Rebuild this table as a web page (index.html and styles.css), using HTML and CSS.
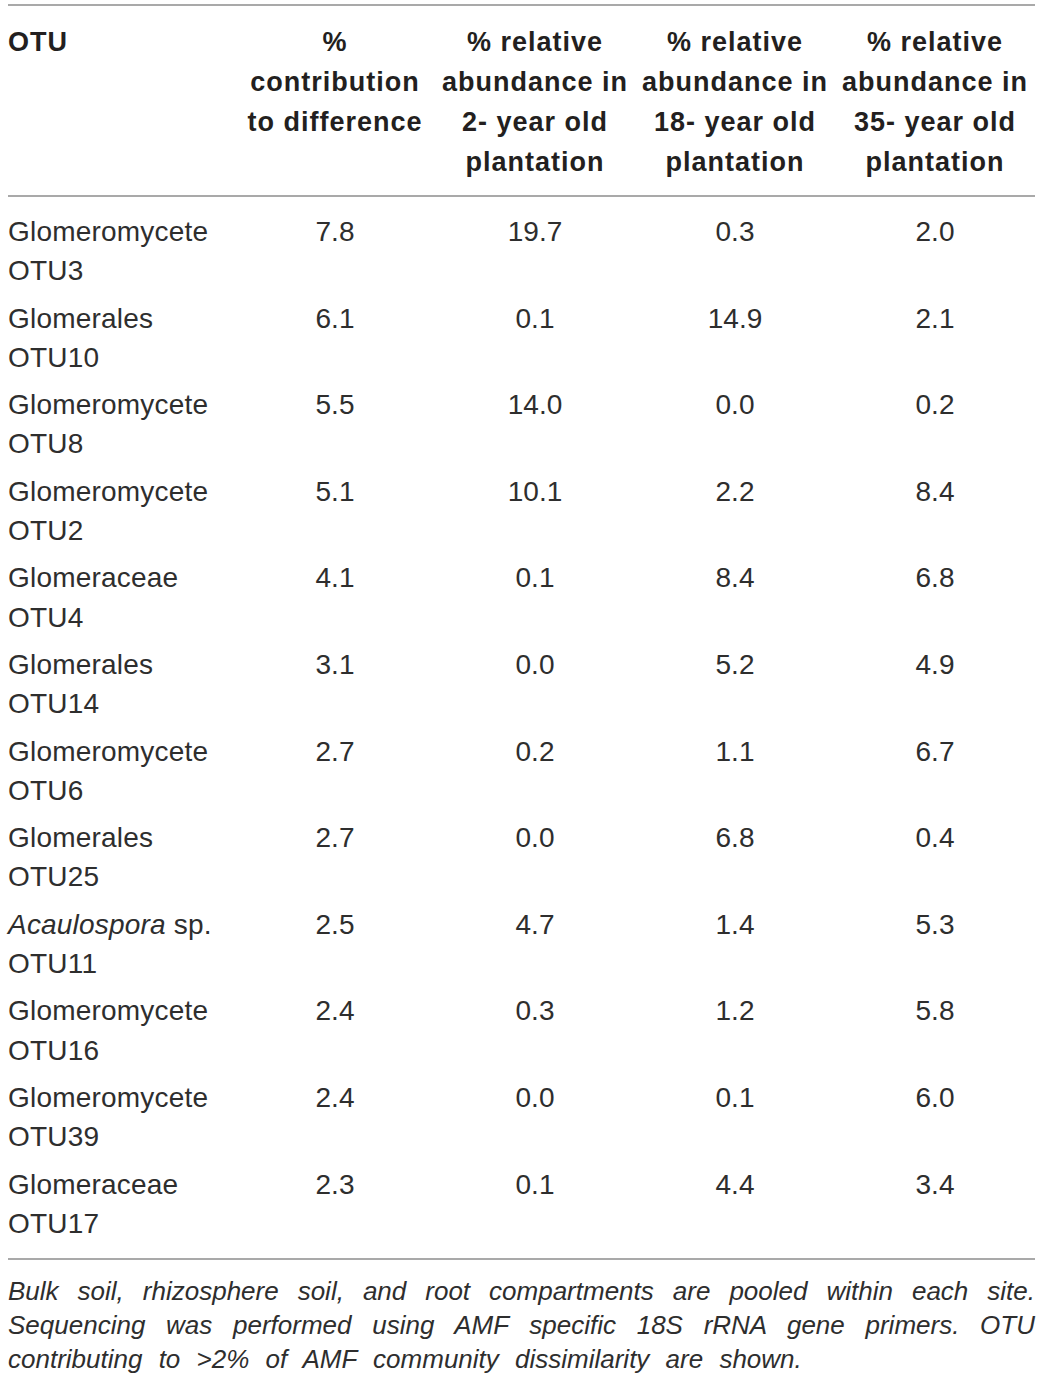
FILE: index.html
```html
<!DOCTYPE html>
<html lang="en">
<head>
    <meta charset="UTF-8">
    <title>AMF OTU contribution table</title>
    <link rel="stylesheet" href="styles.css">
</head>
<body>
    <div class="table-wrap">
        <table class="otu-table">
            <thead>
                <tr>
                    <th class="col-name">OTU</th>
                    <th>%<br>contribution<br>to difference</th>
                    <th>% relative<br>abundance in<br>2- year old<br>plantation</th>
                    <th>% relative<br>abundance in<br>18- year old<br>plantation</th>
                    <th>% relative<br>abundance in<br>35- year old<br>plantation</th>
                </tr>
            </thead>
            <tbody>
                <tr><td class="col-name">Glomeromycete<br>OTU3</td><td>7.8</td><td>19.7</td><td>0.3</td><td>2.0</td></tr>
                <tr><td class="col-name">Glomerales<br>OTU10</td><td>6.1</td><td>0.1</td><td>14.9</td><td>2.1</td></tr>
                <tr><td class="col-name">Glomeromycete<br>OTU8</td><td>5.5</td><td>14.0</td><td>0.0</td><td>0.2</td></tr>
                <tr><td class="col-name">Glomeromycete<br>OTU2</td><td>5.1</td><td>10.1</td><td>2.2</td><td>8.4</td></tr>
                <tr><td class="col-name">Glomeraceae<br>OTU4</td><td>4.1</td><td>0.1</td><td>8.4</td><td>6.8</td></tr>
                <tr><td class="col-name">Glomerales<br>OTU14</td><td>3.1</td><td>0.0</td><td>5.2</td><td>4.9</td></tr>
                <tr><td class="col-name">Glomeromycete<br>OTU6</td><td>2.7</td><td>0.2</td><td>1.1</td><td>6.7</td></tr>
                <tr><td class="col-name">Glomerales<br>OTU25</td><td>2.7</td><td>0.0</td><td>6.8</td><td>0.4</td></tr>
                <tr><td class="col-name"><em>Acaulospora</em> sp.<br>OTU11</td><td>2.5</td><td>4.7</td><td>1.4</td><td>5.3</td></tr>
                <tr><td class="col-name">Glomeromycete<br>OTU16</td><td>2.4</td><td>0.3</td><td>1.2</td><td>5.8</td></tr>
                <tr><td class="col-name">Glomeromycete<br>OTU39</td><td>2.4</td><td>0.0</td><td>0.1</td><td>6.0</td></tr>
                <tr><td class="col-name">Glomeraceae<br>OTU17</td><td>2.3</td><td>0.1</td><td>4.4</td><td>3.4</td></tr>
            </tbody>
        </table>
        <div class="footnote">
            <span class="fn-line">Bulk soil, rhizosphere soil, and root compartments are pooled within each site.</span>
            <span class="fn-line">Sequencing was performed using AMF specific 18S rRNA gene primers. OTU</span>
            <span class="fn-line fn-last">contributing to &gt;2% of AMF community dissimilarity are shown.</span>
        </div>
    </div>
</body>
</html>
```

FILE: styles.css
```css
body {
    margin: 0;
    padding: 4px 7px 0 8px;
    background-color: #fff;
    color: #231f20;
    font-family: "Liberation Sans", Arial, sans-serif;
}
.table-wrap {
    width: 1027px;
}
.otu-table {
    width: 100%;
    border-collapse: collapse;
    table-layout: fixed;
    border-top: 2px solid #a9a9a9;
    border-bottom: 2px solid #a9a9a9;
}
.otu-table th, .otu-table td {
    padding: 0;
    text-align: center;
    vertical-align: top;
    width: 200px;
}
.otu-table .col-name {
    text-align: left;
    width: 227px;
}
.otu-table th {
    font-size: 27px;
    font-weight: bold;
    letter-spacing: 1px;
    line-height: 40px;
    padding: 16px 0 13px;
    border-bottom: 2px solid #a9a9a9;
    white-space: nowrap;
}
.otu-table td {
    font-size: 28px;
    line-height: 39.3px;
    padding: 4px 0 4px;
    color: #2e2e2e;
}
.otu-table td.col-name {
    letter-spacing: 0.2px;
}
.otu-table tbody tr:first-child td {
    padding-top: 15px;
}
.otu-table tbody tr:last-child td {
    padding-bottom: 15px;
}
.otu-table em {
    font-style: italic;
}
.footnote {
    padding-top: 14px;
    font-size: 26px;
    line-height: 34px;
    font-style: italic;
    word-spacing: 9px;
    color: #2e2e2e;
}
.fn-line {
    display: block;
    text-align: justify;
    text-align-last: justify;
}
.fn-line.fn-last {
    text-align: left;
    text-align-last: left;
}
```
